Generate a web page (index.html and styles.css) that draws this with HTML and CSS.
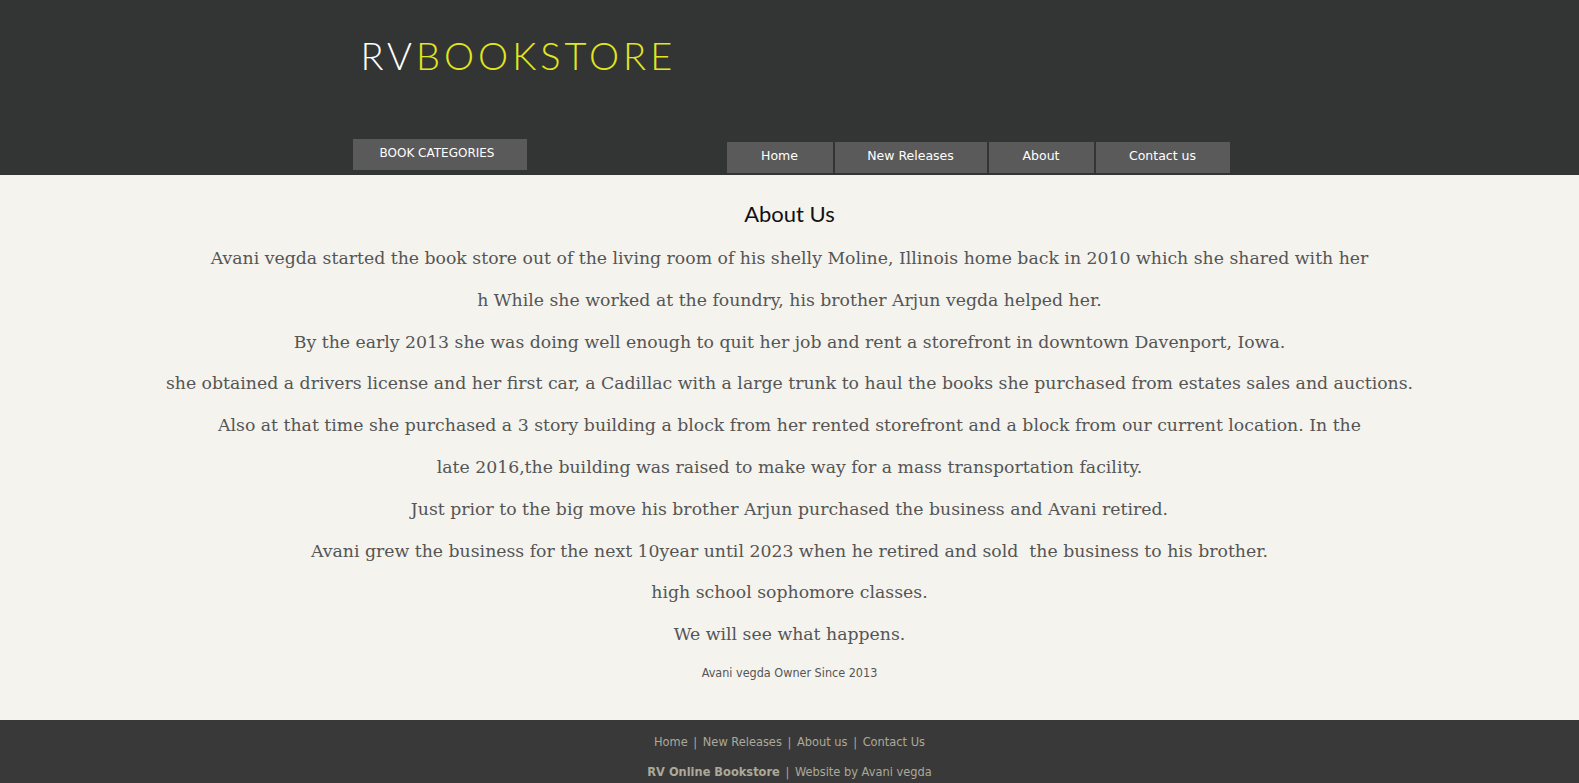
FILE: index.html
```html
<!DOCTYPE html>
<html>
<head>
<meta charset="utf-8">
<link rel="stylesheet" href="styles.css">
</head>
<body>
<header class="header">
  <div class="wrap">
    <div class="logo"><span class="rv">RV</span><span class="bs">BOOKSTORE</span></div>
    <div class="bar">
      <div class="cat">BOOK CATEGORIES</div>
      <nav class="nav">
        <a class="n1">Home</a>
        <a class="n2">New Releases</a>
        <a class="n3">About</a>
        <a class="n4">Contact us</a>
      </nav>
    </div>
  </div>
</header>
<main class="main">
  <h1 class="title">About Us</h1>
  <p>Avani vegda started the book store out of the living room of his shelly Moline, Illinois home back in 2010 which she shared with her</p>
  <p>h While she worked at the foundry, his brother Arjun vegda helped her.</p>
  <p>By the early 2013 she was doing well enough to quit her job and rent a storefront in downtown Davenport, Iowa.</p>
  <p>she obtained a drivers license and her first car, a Cadillac with a large trunk to haul the books she purchased from estates sales and auctions.</p>
  <p>Also at that time she purchased a 3 story building a block from her rented storefront and a block from our current location. In the</p>
  <p>late 2016,the building was raised to make way for a mass transportation facility.</p>
  <p>Just prior to the big move his brother Arjun purchased the business and Avani retired.</p>
  <p>Avani grew the business for the next 10year until 2023 when he retired and sold &nbsp;the business to his brother.</p>
  <p>high school sophomore classes.</p>
  <p>We will see what happens.</p>
  <div class="owner">Avani vegda Owner Since 2013</div>
</main>
<footer class="footer">
  <div class="flinks">Home <span class="sep">|</span> New Releases <span class="sep">|</span> About us <span class="sep">|</span> Contact Us</div>
  <div class="fcopy"><b>RV Online Bookstore</b> <span class="sep">|</span> Website by Avani vegda</div>
</footer>
</body>
</html>
```

FILE: styles.css
```css
html, body { margin: 0; padding: 0; }
body { background: #f4f3ee; font-family: "DejaVu Sans", sans-serif; }
.header { background: #333535; height: 175px; }
.wrap { width: 878px; margin: 0 auto; height: 175px; display: flex; flex-direction: column; justify-content: space-between; }
.logo { padding: 33px 0 0 10px; font-family: "Lato", "DejaVu Sans", sans-serif; font-weight: 300; font-size: 38px; letter-spacing: 4px; line-height: 44px; }
.rv { color: #ffffff; }
.bs { color: #e1e61f; }
.bar { display: flex; align-items: flex-start; justify-content: space-between; margin-left: 2px; height: 36px; }
.cat { background: #5a5a5a; color: #fff; font-size: 12px; width: 174px; height: 31px; box-sizing: border-box; padding: 7px 0 0 27px; }
.nav { display: flex; gap: 2px; margin-top: 3px; margin-right: -1px; background: #333535; }
.nav a { background: #5a5a5a; color: #fff; font-size: 12.5px; height: 31px; line-height: 28px; text-align: center; display: block; }
.n1 { width: 106px; }
.n2 { width: 152px; }
.n3 { width: 105px; }
.n4 { width: 134px; }
.main { text-align: center; padding: 24px 0 0; height: 545px; box-sizing: border-box; }
.title { font-family: "Lato", "DejaVu Sans", sans-serif; font-weight: 400; font-size: 22px; color: #111; margin: 0 0 9px; line-height: 30px; }
.main p { font-family: "DejaVu Serif", serif; font-size: 17.3px; color: #555; margin: 0; line-height: 41.8px; }
.owner { font-family: "DejaVu Sans Condensed", "DejaVu Sans", sans-serif; font-size: 12.5px; color: #555; margin-top: 7px; line-height: 20px; }
.footer { background: #3a3939; height: 63px; text-align: center; color: #aaa99a; font-family: "DejaVu Sans Condensed", "DejaVu Sans", sans-serif; font-size: 12.7px; padding-top: 13px; box-sizing: border-box; }
.flinks { line-height: 18px; }
.fcopy { line-height: 18px; margin-top: 12px; }
.sep { padding: 0 2px; }
.fcopy b { font-weight: bold; }
```
